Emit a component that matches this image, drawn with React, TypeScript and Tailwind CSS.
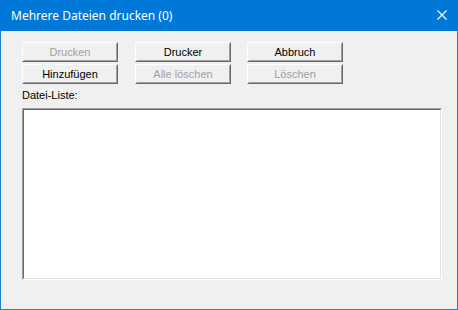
const FONT = "font-['Liberation_Sans',Arial,sans-serif]";

type BtnProps = { label: string; disabled?: boolean; className?: string };

// klassischer 3D-Button (Windows-Stil)
const WinButton = ({ label, disabled, className = '' }: BtnProps) => (
  <button
    disabled={disabled}
    className={`h-[20px] w-[96px] p-0 border border-t-white border-l-white border-b-[#696969] border-r-[#696969] bg-[#f0f0f0] ${className}`}
  >
    <span className="flex h-full w-full items-center justify-center border border-t-[#f0f0f0] border-l-[#f0f0f0] border-b-[#a0a0a0] border-r-[#a0a0a0]">
      <span className={`text-[11px] leading-[13px] ${disabled ? 'text-[#a0a0a0]' : 'text-black'}`}>{label}</span>
    </span>
  </button>
);

export default function App() {
  return (
    <div className={`w-[458px] h-[310px] flex flex-col bg-[#f0f0f0] border border-t-0 border-[#1c7fd6] ${FONT}`}>
      {/* Titelleiste */}
      <div className="h-[31px] -mx-px flex items-center justify-between bg-[#0078d7] pl-[11px] pr-[11px]">
        <span className="font-['Noto_Sans','Open_Sans',sans-serif] text-[12px] text-white leading-none">
          Mehrere Dateien drucken (0)
        </span>
        <svg width="10" height="10" viewBox="0 0 10 10" className="mt-[-1px]">
          <path d="M0.5 0.5 L9.5 9.5 M9.5 0.5 L0.5 9.5" stroke="white" strokeWidth="1.1" fill="none" />
        </svg>
      </div>

      {/* Inhalt */}
      <div className="flex-1 pl-[21px] pt-[11px]">
        <div className="flex">
          <WinButton label="Drucken" disabled />
          <WinButton label="Drucker" className="ml-[17px]" />
          <WinButton label="Abbruch" className="ml-[16px]" />
        </div>
        <div className="flex mt-[2px]">
          <WinButton label="Hinzufügen" />
          <WinButton label="Alle löschen" disabled className="ml-[17px]" />
          <WinButton label="Löschen" disabled className="ml-[16px]" />
        </div>
        <div className="mt-[4px] h-[14px] text-[11px] leading-[14px] text-black">Datei-Liste:</div>
        <div className="mt-[6px] w-[420px] h-[172px] border border-t-[#a0a0a0] border-l-[#a0a0a0] border-b-white border-r-white">
          <div className="h-full w-full bg-white border border-t-[#696969] border-l-[#696969] border-b-[#e3e3e3] border-r-[#e3e3e3]" />
        </div>
      </div>
    </div>
  );
}
